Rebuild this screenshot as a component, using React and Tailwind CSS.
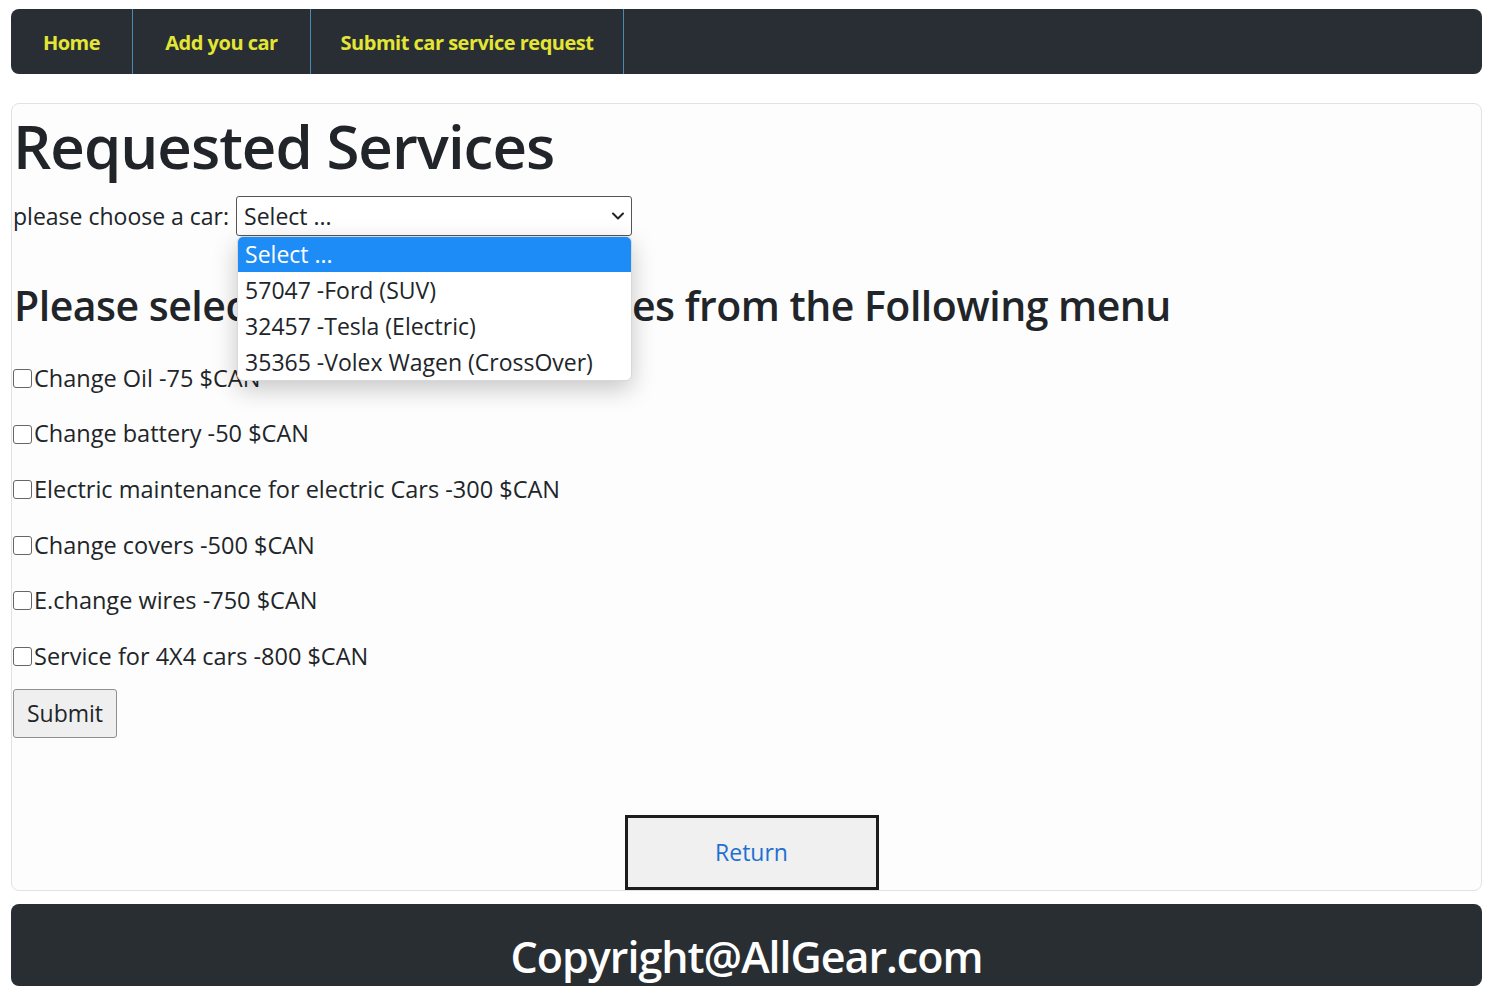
import React from 'react';

const services = [
  'Change Oil -75 $CAN',
  'Change battery -50 $CAN',
  'Electric maintenance for electric Cars -300 $CAN',
  'Change covers -500 $CAN',
  'E.change wires -750 $CAN',
  'Service for 4X4 cars -800 $CAN',
];

const cars = ['57047 -Ford (SUV)', '32457 -Tesla (Electric)', '35365 -Volex Wagen (CrossOver)'];

const App = () => {
  return (
    <div className="min-h-screen bg-white px-[11px] pt-[9px] text-[#212529]" style={{ fontFamily: '"Open Sans", "Noto Sans", sans-serif' }}>
      {/* Navigation */}
      <nav className="h-[65px] w-[1471px] bg-[#292e34] rounded-[8px] flex items-stretch">
        <a className="w-[122px] pt-[3px] flex items-center justify-center border-r border-[#4a88b8] text-[#e3e635] font-bold text-[20px] tracking-[-0.5px]">Home</a>
        <a className="w-[178px] pt-[3px] flex items-center justify-center border-r border-[#4a88b8] text-[#e3e635] font-bold text-[20px] tracking-[-0.5px]">Add you car</a>
        <a className="w-[313px] pt-[3px] flex items-center justify-center border-r border-[#4a88b8] text-[#e3e635] font-bold text-[20px] tracking-[-0.5px]">Submit car service request</a>
      </nav>

      {/* Main card */}
      <div className="mt-[29px] w-[1471px] h-[788px] border border-[#e2e2e2] rounded-[8px] bg-[#fdfdfd] px-[1px] flex flex-col">
        <h1 className="text-[60px] leading-[76px] font-semibold tracking-[-1px] mt-[4px]">Requested Services</h1>

        <div className="flex items-center mt-[12px] relative">
          <span className="text-[23px]">please choose a car:</span>
          <div className="relative ml-[7px]">
            <div className="w-[396px] h-[40px] border border-[#555] rounded-[3px] bg-white flex items-center justify-between pl-[7px] pr-[6px]">
              <span className="text-[23px]">Select ...</span>
              <svg width="14" height="10" viewBox="0 0 14 10" fill="none">
                <path d="M2 2.5 L7 7.5 L12 2.5" stroke="#222" strokeWidth="2" strokeLinecap="round" strokeLinejoin="round" />
              </svg>
            </div>
            {/* Open dropdown */}
            <div className="absolute left-[1px] top-[40px] w-[395px] bg-white rounded-[6px] shadow-[0_8px_24px_rgba(0,0,0,0.22)] overflow-hidden z-10 border border-[#d8d8d8]">
              <div className="h-[35px] bg-[#1e8cf6] text-white flex items-center px-[7px] text-[23px]">Select ...</div>
              {cars.map((c) => (
                <div key={c} className="h-[36px] flex items-center px-[7px] text-[23px]">{c}</div>
              ))}
            </div>
          </div>
        </div>

        <h2 className="text-[41px] leading-[50px] font-semibold tracking-[-0.5px] mt-[44px] ml-[1px]">Please select one or more services from the Following menu</h2>

        <div className="mt-[36px] flex flex-col gap-[30.6px]">
          {services.map((s) => (
            <label key={s} className="flex items-center h-[25px] text-[23.5px]">
              <input type="checkbox" className="w-[19px] h-[19px] m-0 mr-[2px] appearance-none border border-[#666] rounded-[3px] bg-white" />
              {s}
            </label>
          ))}
        </div>

        <div className="mt-[20px]">
          <button className="h-[49px] w-[104px] bg-[#efefef] border border-[#8f8f8f] rounded-[3px] text-[23px]">Submit</button>
        </div>

        <div className="mt-auto flex justify-center">
          <button className="w-[254px] h-[75px] bg-[#f0f0f0] border-[3px] border-[#1d1d1d] text-[#1f6fd1] text-[23px] ml-[10px]">Return</button>
        </div>
      </div>

      {/* Footer */}
      <footer className="mt-[13px] w-[1471px] h-[82px] bg-[#292e33] rounded-[8px] flex items-end justify-center">
        <span className="text-white text-[43px] font-semibold leading-[1] translate-y-[-8px] tracking-[-1px]">Copyright@AllGear.com</span>
      </footer>
    </div>
  );
};

export default App;
